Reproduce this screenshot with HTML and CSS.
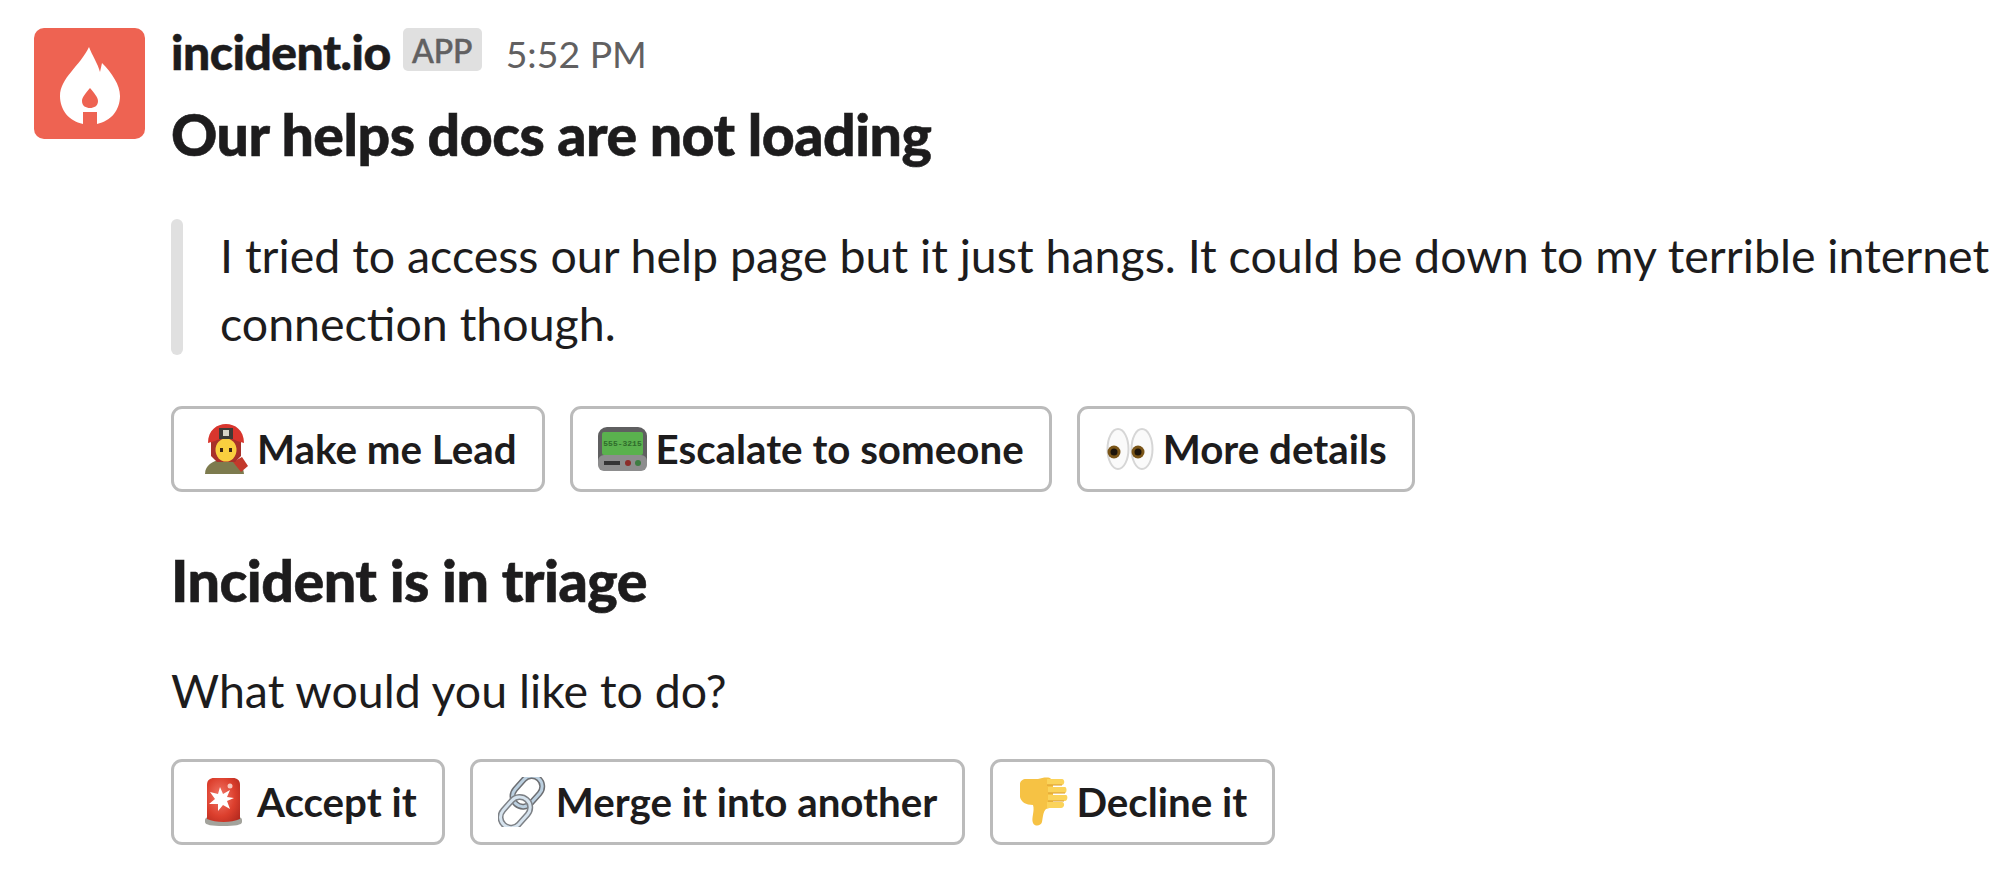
FILE: index.html
```html
<!DOCTYPE html>
<html lang="en">
<head>
<meta charset="utf-8">
<title>incident.io</title>
<link rel="stylesheet" href="styles.css">
</head>
<body>
<main class="message">
  <div class="avatar">
    <svg viewBox="0 0 111 111" width="111" height="111">
      <path fill="#fff" fill-rule="evenodd" d="M55 19C58 27 64 36 66 44L68 35C78 45 86 57 86 68C86 82 77 93 63 96L63 84L49 84L49 96C35 93 26 82 26 68C26 50 46 38 55 19ZM56 60C52 65 48 69 48 73C48 78 52 80 56 80C60 80 64 78 64 73C64 69 60 65 56 60Z"/>
    </svg>
  </div>
  <div class="content">
    <div class="meta">
      <span class="name">incident.io</span>
      <span class="badge">APP</span>
      <span class="time">5:52 PM</span>
    </div>
    <h1 class="title">Our helps docs are not loading</h1>
    <blockquote class="quote">I tried to access our help page but it just hangs. It could be down to my terrible internet connection though.</blockquote>
    <div class="actions">
      <button class="btn">
        <svg class="emoji" viewBox="-6 0 52 50" width="52" height="50">
          <path fill="#7d7b4e" d="M0 50C0 41 8 37 15 36H28C34 37 38 41 39 50Z"/>
          <path fill="#c3392b" d="M28 38L37 33L43 42L36 48Z"/>
          <path fill="#a8312a" d="M6 15H36V32L30 38H12L6 32Z"/>
          <ellipse cx="21" cy="26" rx="10.5" ry="11.5" fill="#f9cf3f"/>
          <path fill="#3b2412" d="M15 24H18V28H15ZM24 24H27V28H24Z"/>
          <path fill="#d8352d" d="M3 19C3 6 12 0 21 0C30 0 39 6 39 19L32 17C28 14 14 14 10 17Z"/>
          <path fill="#3d3a36" d="M14 4H28V15H14Z"/>
          <path fill="#d9d4c6" d="M18 6H24V12H18Z"/>
        </svg>
        <span class="label">Make me Lead</span>
      </button>
      <button class="btn">
        <svg class="emoji" viewBox="0 -3 52 50" width="52" height="50">
          <rect x="0" y="0" width="49" height="44" rx="9" fill="#5f5f60"/>
          <rect x="0" y="28" width="49" height="16" rx="6" fill="#8d8d8e"/>
          <rect x="4" y="5" width="41" height="23" rx="2" fill="#5ab14e"/>
          <text x="24.5" y="19" class="pager-text">555-3215</text>
          <rect x="6" y="34" width="16" height="4" fill="#343435"/>
          <circle cx="30" cy="36" r="3" fill="#8c2d2a"/>
          <circle cx="40" cy="36" r="3" fill="#3d7c42"/>
        </svg>
        <span class="label">Escalate to someone</span>
      </button>
      <button class="btn">
        <svg class="emoji" viewBox="-1 -4 52 50" width="52" height="50">
          <ellipse cx="12" cy="21" rx="10.5" ry="20" fill="#fafafa" stroke="#d6d6d6" stroke-width="2"/>
          <ellipse cx="36" cy="21" rx="10.5" ry="20" fill="#fafafa" stroke="#d6d6d6" stroke-width="2"/>
          <circle cx="8" cy="24" r="6.5" fill="#7a5518"/>
          <circle cx="32" cy="24" r="6.5" fill="#7a5518"/>
          <circle cx="8" cy="24" r="3.5" fill="#1d140a"/>
          <circle cx="32" cy="24" r="3.5" fill="#1d140a"/>
        </svg>
        <span class="label">More details</span>
      </button>
    </div>
    <h2 class="subtitle">Incident is in triage</h2>
    <p class="prompt">What would you like to do?</p>
    <div class="actions actions-last">
      <button class="btn">
        <svg class="emoji" viewBox="-6 0 52 50" width="52" height="50">
          <defs>
            <radialGradient id="flash" cx="0.4" cy="0.42" r="0.75">
              <stop offset="0" stop-color="#f2796a"/>
              <stop offset="0.6" stop-color="#dc3f2d"/>
              <stop offset="1" stop-color="#b52a1f"/>
            </radialGradient>
          </defs>
          <path fill="#a3a39c" d="M0 43C0 41 2 40 4 40H33C35 40 37 41 37 43V45C37 48 30 49 18 49C7 49 0 48 0 45Z"/>
          <path fill="url(#flash)" d="M2 42V8C2 3 5 1 9 1H28C32 1 35 3 35 8V42C26 46 11 46 2 42Z"/>
          <path fill="#fff" d="M15 10L18 17L25 13L22 20L29 21L22 24L25 32L18 28L13 34L13 27L4 27L10 22L5 15L13 17Z"/>
          <circle cx="25" cy="9" r="2.5" fill="#f6c7bf"/>
        </svg>
        <span class="label">Accept it</span>
      </button>
      <button class="btn">
        <svg class="emoji" viewBox="1 0 52 50" width="52" height="50">
          <g fill="none">
            <rect x="20" y="-3" width="21" height="34" rx="10.5" transform="rotate(42 30 14)" stroke="#6d6f73" stroke-width="6"/>
            <rect x="20" y="-3" width="21" height="34" rx="10.5" transform="rotate(42 30 14)" stroke="#bcd0e0" stroke-width="3"/>
            <rect x="8" y="18" width="21" height="34" rx="10.5" transform="rotate(42 18 35)" stroke="#7d8186" stroke-width="6"/>
            <rect x="8" y="18" width="21" height="34" rx="10.5" transform="rotate(42 18 35)" stroke="#d6e3ee" stroke-width="3"/>
          </g>
        </svg>
        <span class="label">Merge it into another</span>
      </button>
      <button class="btn">
        <svg class="emoji" viewBox="-2 0 52 50" width="52" height="50">
          <path fill="#f6c244" d="M0 7C0 4 3 2 6 2H18C22 1 26 0 30 1L33 4V30L26 32C23 35 23 40 22 45C21 49 15 50 13 46C11 41 15 34 13 28C6 28 1 25 0 20Z"/>
          <path fill="#fbd35a" d="M27 2H42C45 2 45 8 42 8H27ZM28 10H45C47 10 47 16 45 16H28ZM28 18H46C48 18 48 24 45 24H28ZM27 25H42C45 25 45 31 41 31H27Z"/>
          <path fill="none" stroke="#d99a2b" stroke-width="1.2" d="M27 8H42M28 16H45M28 24H44"/>
        </svg>
        <span class="label">Decline it</span>
      </button>
    </div>
  </div>
</main>
</body>
</html>
```

FILE: styles.css
```css
* { box-sizing: border-box; }
html, body { margin: 0; background: #fff; }
body {
  font-family: Lato, "Liberation Sans", sans-serif;
  color: #1d1c1d;
  width: 2014px;
  height: 882px;
  overflow: hidden;
}
.message {
  display: flex;
  gap: 26px;
  padding: 28px 0 0 34px;
}
.avatar {
  width: 111px;
  height: 111px;
  flex: none;
  background: #ee6352;
  border-radius: 10px;
}
.avatar svg { display: block; }
.content { flex: 1; min-width: 0; }
.meta {
  display: flex;
  align-items: flex-start;
  height: 43px;
}
.name {
  font-weight: 900;
  font-size: 48px;
  line-height: 48px;
  letter-spacing: -0.5px;
  -webkit-text-stroke: 0.5px #1d1c1d;
}
.badge {
  margin-left: 12px;
  width: 79px;
  height: 43px;
  background: #e0e0e0;
  border-radius: 5px;
  color: #616061;
  font-size: 32px;
  font-weight: 500;
  line-height: 46px;
  text-align: center;
  -webkit-text-stroke: 0.5px #616061;
}
.time {
  margin-left: 24px;
  margin-top: 4px;
  color: #616061;
  font-size: 37.4px;
  line-height: 44px;
}
.title {
  margin: 28px 0 0;
  font-size: 57.2px;
  font-weight: 900;
  line-height: 70px;
  letter-spacing: -0.5px;
  -webkit-text-stroke: 0.6px #1d1c1d;
}
.quote {
  position: relative;
  margin: 50px 0 0;
  padding: 2px 0 0 49px;
  width: 1830px;
  font-size: 46.5px;
  line-height: 68px;
  height: 136px;
}
.quote::before {
  content: "";
  position: absolute;
  left: 0;
  top: 0;
  bottom: 0;
  width: 12px;
  background: #e0e0e0;
  border-radius: 6px;
}
.actions {
  display: flex;
  gap: 25px;
  margin-top: 51px;
}
.actions-last { margin-top: 35px; }
.btn {
  display: flex;
  align-items: center;
  height: 86px;
  padding: 0 25px 0 25px;
  gap: 6px;
  background: #fff;
  border: 3px solid #bbb;
  border-radius: 11px;
  color: #1d1c1d;
  font-family: inherit;
  font-size: 40.3px;
  font-weight: 700;
  white-space: nowrap;
}
.label { margin-top: -2px; }
.emoji { display: block; flex: none; }
.pager-text {
  font-size: 8px;
  font-weight: 700;
  fill: #2f6b2b;
  text-anchor: middle;
  font-family: "Liberation Mono", monospace;
}
.subtitle {
  margin: 53px 0 0;
  font-size: 57.4px;
  font-weight: 900;
  line-height: 70px;
  letter-spacing: -0.5px;
  -webkit-text-stroke: 0.6px #1d1c1d;
}
.prompt {
  margin: 42px 0 0;
  font-size: 46.5px;
  line-height: 67px;
}
```
